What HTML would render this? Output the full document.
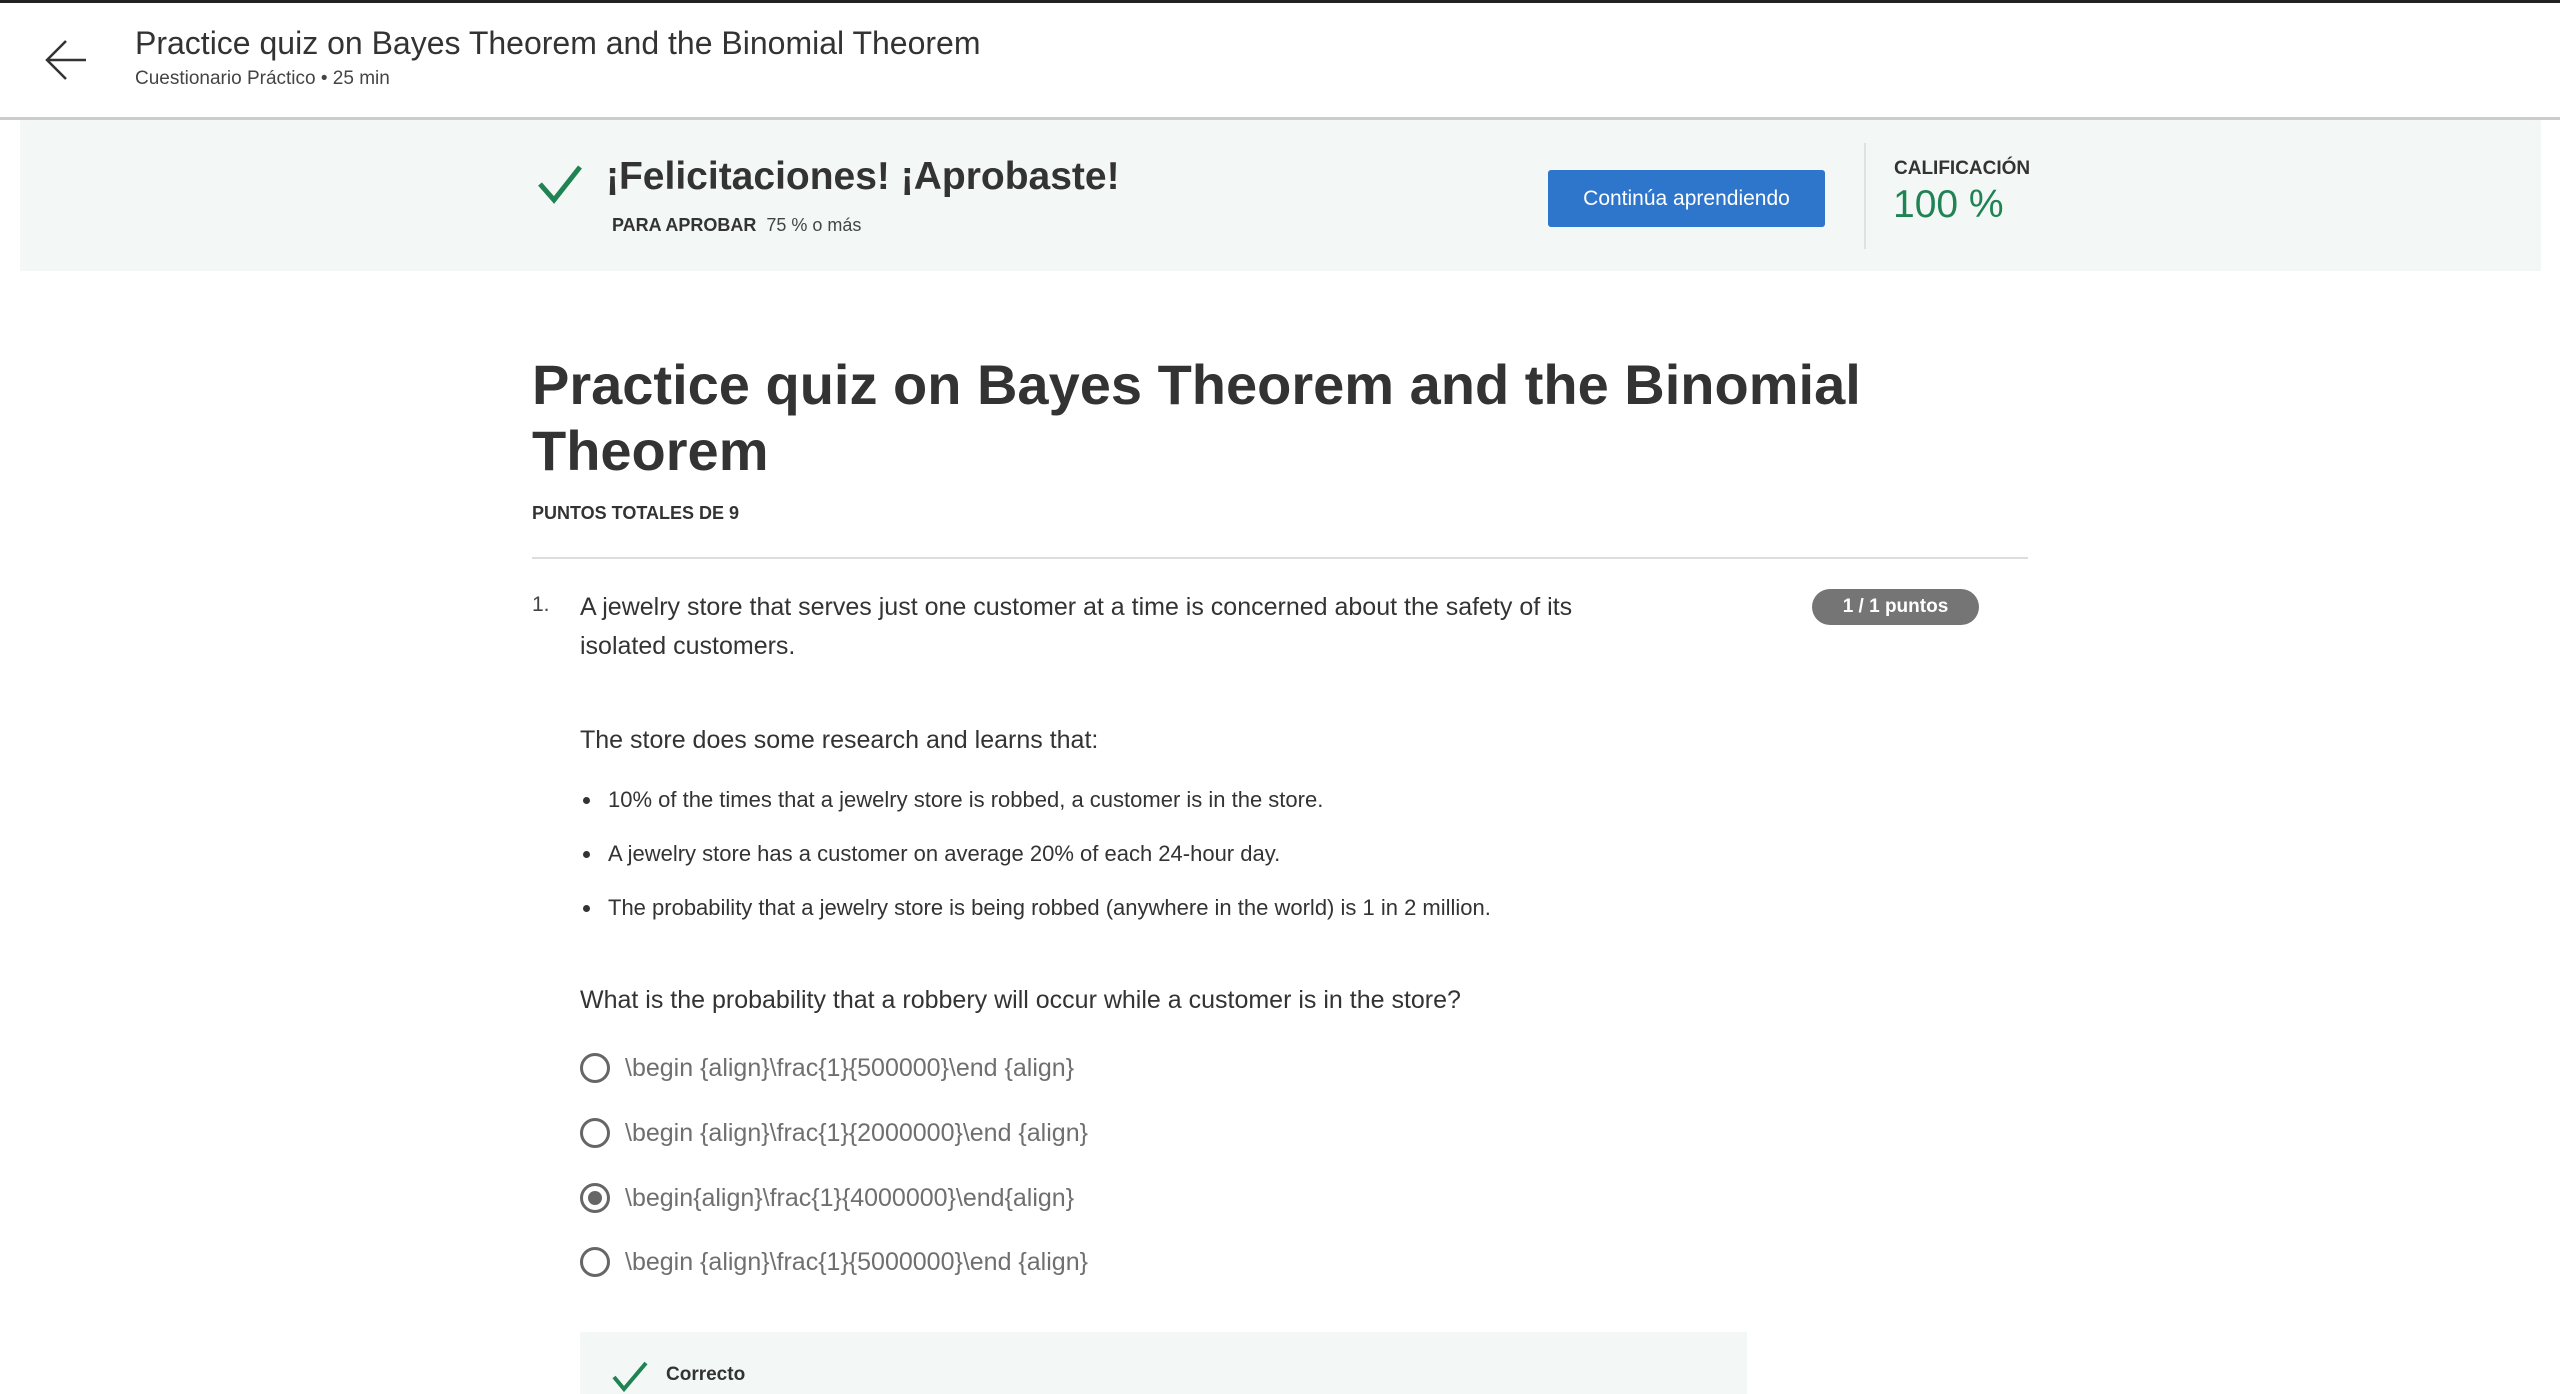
<!DOCTYPE html>
<html><head><meta charset="utf-8"><style>
*{margin:0;padding:0;box-sizing:border-box}
body{width:2560px;height:1394px;overflow:hidden;background:#fff;font-family:"Liberation Sans",sans-serif;color:#333;position:relative}
.a{position:absolute;white-space:nowrap}
.opt{position:absolute;left:580px;font-size:25px;color:#6f6f6f;white-space:nowrap}
.opt .r{position:absolute;left:0;top:-15px;width:30px;height:30px;border:3px solid #666;border-radius:50%}
.opt span{position:absolute;left:45px;top:-15px;line-height:30px;white-space:nowrap}
.bl{position:absolute;left:583px;font-size:22px;color:#333}
.bl:before{content:"";position:absolute;left:0;top:-3px;width:7px;height:7px;border-radius:50%;background:#333}
.bl span{position:absolute;left:25px;top:-14px;line-height:28px;white-space:nowrap}
</style></head><body>
<div class="a" style="left:0;top:0;width:2560px;height:3px;background:#222"></div>
<svg class="a" style="left:44px;top:38px" width="46" height="44" viewBox="0 0 46 44"><path d="M42 22H4M22 3L3 22l19 19" stroke="#333" stroke-width="2.5" fill="none"/></svg>
<div class="a" style="left:135px;top:25px;font-size:32px;color:#333">Practice quiz on Bayes Theorem and the Binomial Theorem</div>
<div class="a" style="left:135px;top:68px;font-size:19px;color:#444">Cuestionario Práctico • 25 min</div>
<div class="a" style="left:0;top:117px;width:2560px;height:3px;background:#ccc"></div>
<div class="a" style="left:20px;top:120px;width:2521px;height:151px;background:#f3f8f6"></div>
<svg class="a" style="left:537px;top:164px" width="46" height="40" viewBox="0 0 46 40"><path d="M3 20l14 16L43 3" stroke="#1f8354" stroke-width="5" fill="none"/></svg>
<div class="a" style="left:606px;top:155px;font-size:39px;font-weight:bold;color:#333">¡Felicitaciones! ¡Aprobaste!</div>
<div class="a" style="left:612px;top:215px;font-size:18px;color:#444"><b style="color:#333">PARA APROBAR</b>&nbsp; 75 % o más</div>
<div class="a" style="left:1548px;top:170px;width:277px;height:57px;background:#2e75cc;border-radius:3px;color:#fff;font-size:21px;text-align:center;line-height:57px">Continúa aprendiendo</div>
<div class="a" style="left:1864px;top:143px;width:2px;height:106px;background:#dde3e0"></div>
<div class="a" style="left:1894px;top:158px;font-size:19px;font-weight:bold;color:#333">CALIFICACIÓN</div>
<div class="a" style="left:1893px;top:183px;font-size:39px;color:#1f8354">100 %</div>
<div class="a" style="left:532px;top:352px;font-size:56px;font-weight:bold;color:#333;line-height:66px;white-space:normal;width:1500px">Practice quiz on Bayes Theorem and the Binomial Theorem</div>
<div class="a" style="left:532px;top:503px;font-size:18px;font-weight:bold;color:#333">PUNTOS TOTALES DE 9</div>
<div class="a" style="left:532px;top:557px;width:1496px;height:2px;background:#ddd"></div>
<div class="a" style="left:532px;top:593px;font-size:21px;color:#444">1.</div>
<div class="a" style="left:580px;top:588px;font-size:25px;line-height:39px;color:#333;white-space:normal;width:1050px">A jewelry store that serves just one customer at a time is concerned about the safety of its isolated customers.</div>
<div class="a" style="left:1812px;top:589px;width:167px;height:36px;border-radius:18px;background:#757575;color:#fff;font-size:19px;font-weight:bold;text-align:center;line-height:36px">1 / 1 puntos</div>
<div class="a" style="left:580px;top:726px;font-size:25px;color:#333">The store does some research and learns that:</div>
<div class="bl" style="top:800px"><span>10% of the times that a jewelry store is robbed, a customer is in the store.</span></div>
<div class="bl" style="top:854px"><span>A jewelry store has a customer on average 20% of each 24-hour day.</span></div>
<div class="bl" style="top:908px"><span>The probability that a jewelry store is being robbed (anywhere in the world) is 1 in 2 million.</span></div>
<div class="a" style="left:580px;top:986px;font-size:25px;color:#333">What is the probability that a robbery will occur while a customer is in the store?</div>
<div class="opt" style="top:1068px"><div class="r"></div><span>\begin {align}\frac{1}{500000}\end {align}</span></div>
<div class="opt" style="top:1133px"><div class="r"></div><span>\begin {align}\frac{1}{2000000}\end {align}</span></div>
<div class="opt" style="top:1198px"><div class="r"><div style="position:absolute;left:5px;top:5px;width:14px;height:14px;border-radius:50%;background:#666"></div></div><span>\begin{align}\frac{1}{4000000}\end{align}</span></div>
<div class="opt" style="top:1262px"><div class="r"></div><span>\begin {align}\frac{1}{5000000}\end {align}</span></div>
<div class="a" style="left:580px;top:1332px;width:1167px;height:62px;background:#f3f8f6"></div>
<svg class="a" style="left:611px;top:1360px" width="38" height="32" viewBox="0 0 38 32"><path d="M3 17l10 12L35 3" stroke="#1f8354" stroke-width="4" fill="none"/></svg>
<div class="a" style="left:666px;top:1364px;font-size:19px;font-weight:bold;color:#333">Correcto</div>
</body></html>
